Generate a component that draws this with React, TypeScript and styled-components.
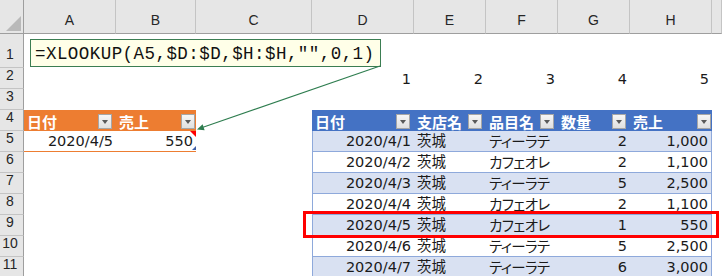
import React from 'react';
import styled, { createGlobalStyle, css } from 'styled-components';

const GlobalStyle = createGlobalStyle`
  html, body { margin: 0; padding: 0; background: #ffffff; }
  body { font-family: "DejaVu Sans", "Noto Sans CJK JP", sans-serif; }
`;

const COLS = '24px 92px 80px 116px 102px 72px 72px 72px 82px 1fr';

const Sheet = styled.div`
  position: relative;
  width: 722px;
  height: 276px;
  overflow: hidden;
  background: #ffffff;
`;

const Row = styled.div<{ $h: number }>`
  display: grid;
  grid-template-columns: ${COLS};
  height: ${(p) => p.$h}px;
`;

const Corner = styled.div`
  position: relative;
  background: #e6e6e6;
  border-right: 1px solid #9e9e9e;
  border-bottom: 1px solid #9e9e9e;
  box-sizing: border-box;
  &::after {
    content: '';
    position: absolute;
    right: 2px;
    bottom: 2px;
    width: 0;
    height: 0;
    border-left: 15px solid transparent;
    border-bottom: 15px solid #b9b9b9;
  }
`;

const ColHead = styled.div`
  box-sizing: border-box;
  background: #e6e6e6;
  border-right: 1px solid #c4c4c4;
  border-bottom: 1px solid #9e9e9e;
  display: flex;
  align-items: flex-end;
  justify-content: center;
  padding-bottom: 6px;
  font-family: "Liberation Sans", Arial, sans-serif;
  font-size: 14px;
  color: #262626;
  line-height: 1;
`;

const RowHead = styled.div`
  box-sizing: border-box;
  background: #e6e6e6;
  border-right: 1px solid #9e9e9e;
  border-bottom: 1px solid #c4c4c4;
  display: flex;
  align-items: flex-end;
  justify-content: center;
  padding: 0 3px 6px 0;
  font-family: "Liberation Sans", Arial, sans-serif;
  font-size: 14px;
  color: #262626;
  line-height: 1;
`;

type Kind = 'plain' | 'orangeHead' | 'blueHead' | 'band' | 'white' | 'orangeData';

const kindStyles: Record<Kind, ReturnType<typeof css>> = {
  plain: css`background: #ffffff;`,
  orangeHead: css`
    background: #ed7d31;
    color: #ffffff;
    font-weight: 700;
  `,
  blueHead: css`
    background: #4472c4;
    color: #ffffff;
    font-weight: 700;
  `,
  band: css`
    background: #d9e1f2;
    border-bottom: 1px solid #8ea9db;
  `,
  white: css`
    background: #ffffff;
    border-bottom: 1px solid #8ea9db;
  `,
  orangeData: css`
    background: #ffffff;
    border-bottom: 1px solid #ed7d31;
  `,
};

const Cell = styled.div<{ $kind: Kind; $align: 'left' | 'right'; $edge?: 'left' | 'right' }>`
  position: relative;
  box-sizing: border-box;
  display: flex;
  align-items: flex-end;
  justify-content: ${(p) => (p.$align === 'right' ? 'flex-end' : 'space-between')};
  gap: 2px;
  padding: 0 3px 3px 3px;
  font-size: 14.5px;
  line-height: 1;
  color: #1a1a1a;
  white-space: nowrap;
  font-feature-settings: "palt";
  ${(p) => kindStyles[p.$kind]}
  ${(p) => p.$edge === 'left' && css`border-left: 1px solid #8ea9db;`}
  ${(p) => p.$edge === 'right' && css`border-right: 1px solid #8ea9db;`}
`;

const HeadCell = styled(Cell)<{ $last?: boolean }>`
  align-items: center;
  padding: 0 ${(p) => (p.$last ? 1 : 4)}px 0 3px;
  font-family: "Noto Sans CJK JP", sans-serif;
  font-size: 15px;
`;

const Kana = styled.span`
  font-family: "Noto Sans CJK JP", sans-serif;
  letter-spacing: -0.6px;
`;

const Label = styled.span`
  padding-top: 1px;
`;

const FilterButton = styled.span`
  position: relative;
  flex: none;
  width: 14px;
  height: 15px;
  box-sizing: border-box;
  margin-top: 2px;
  background: linear-gradient(#f6f6f6, #e0e0e0);
  border: 1px solid #a6a6a6;
  &::after {
    content: '';
    position: absolute;
    left: 3px;
    top: 5px;
    width: 0;
    height: 0;
    border-left: 3.5px solid transparent;
    border-right: 3.5px solid transparent;
    border-top: 4px solid #595959;
  }
`;

const CommentMark = styled.span`
  position: absolute;
  top: 0;
  right: 0;
  width: 0;
  height: 0;
  border-left: 6px solid transparent;
  border-top: 6px solid #ff0000;
`;

const ResizeMark = styled.span`
  position: absolute;
  bottom: 1px;
  right: 0;
  width: 0;
  height: 0;
  border-left: 4px solid transparent;
  border-bottom: 4px solid #3d5fa8;
`;

const FormulaBox = styled.div`
  position: absolute;
  left: 30px;
  top: 39px;
  width: 351px;
  height: 28px;
  box-sizing: border-box;
  border: 1px solid #3b7d52;
  background: #ffffe8;
  display: flex;
  align-items: center;
  padding: 1px 0 0 4px;
  font-family: "Liberation Mono", "DejaVu Sans Mono", monospace;
  font-size: 17.5px;
  letter-spacing: 0.45px;
  color: #111111;
  white-space: nowrap;
`;

const ArrowLayer = styled.svg`
  position: absolute;
  left: 0;
  top: 0;
  pointer-events: none;
`;

const Highlight = styled.div`
  position: absolute;
  left: 303px;
  top: 211px;
  width: 416px;
  height: 27px;
  box-sizing: border-box;
  border: 3px solid #ff0000;
  pointer-events: none;
`;

const letters = ['A', 'B', 'C', 'D', 'E', 'F', 'G', 'H', ''];

type Rec = [string, string, string, number, string];
const records: Rec[] = [
  ['2020/4/1', '茨城', 'ティーラテ', 2, '1,000'],
  ['2020/4/2', '茨城', 'カフェオレ', 2, '1,100'],
  ['2020/4/3', '茨城', 'ティーラテ', 5, '2,500'],
  ['2020/4/4', '茨城', 'カフェオレ', 2, '1,100'],
  ['2020/4/5', '茨城', 'カフェオレ', 1, '550'],
  ['2020/4/6', '茨城', 'ティーラテ', 5, '2,500'],
  ['2020/4/7', '茨城', 'ティーラテ', 6, '3,000'],
];

const blueHeads = ['日付', '支店名', '品目名', '数量', '売上'];

const Blank = () => <Cell $kind="plain" $align="left" />;

const Filler = styled.div`
  background: #ffffff;
`;

export default function App() {
  return (
    <Sheet>
      <GlobalStyle />
      <Row $h={34}>
        <Corner />
        {letters.map((l, i) => (
          <ColHead key={i}>{l}</ColHead>
        ))}
      </Row>

      <Row $h={34}>
        <RowHead>1</RowHead>
        {Array.from({ length: 8 }).map((_, i) => (
          <Blank key={i} />
        ))}
        <Filler />
      </Row>

      <Row $h={21}>
        <RowHead>2</RowHead>
        <Blank />
        <Blank />
        <Blank />
        {[1, 2, 3, 4, 5].map((n) => (
          <Cell key={n} $kind="plain" $align="right">
            {n}
          </Cell>
        ))}
        <Filler />
      </Row>

      <Row $h={21}>
        <RowHead>3</RowHead>
        {Array.from({ length: 8 }).map((_, i) => (
          <Blank key={i} />
        ))}
        <Filler />
      </Row>

      <Row $h={21}>
        <RowHead>4</RowHead>
        <HeadCell $kind="orangeHead" $align="left">
          <Label>日付</Label>
          <FilterButton />
        </HeadCell>
        <HeadCell $kind="orangeHead" $align="left" $last>
          <Label>売上</Label>
          <FilterButton />
        </HeadCell>
        <Blank />
        {blueHeads.map((h, i) => (
          <HeadCell key={h} $kind="blueHead" $align="left" $last={i === blueHeads.length - 1}>
            <Label>{h}</Label>
            <FilterButton />
          </HeadCell>
        ))}
        <Filler />
      </Row>

      {records.map((r, i) => {
        const kind: Kind = i % 2 === 0 ? 'band' : 'white';
        return (
          <Row key={r[0]} $h={21}>
            <RowHead>{i + 5}</RowHead>
            {i === 0 ? (
              <>
                <Cell $kind="orangeData" $align="right">
                  2020/4/5
                </Cell>
                <Cell $kind="orangeData" $align="right">
                  550
                  <CommentMark />
                  <ResizeMark />
                </Cell>
              </>
            ) : (
              <>
                <Blank />
                <Blank />
              </>
            )}
            <Blank />
            <Cell $kind={kind} $align="right" $edge="left">
              {r[0]}
            </Cell>
            <Cell $kind={kind} $align="left">
              {r[1]}
            </Cell>
            <Cell $kind={kind} $align="left">
              <Kana>{r[2]}</Kana>
            </Cell>
            <Cell $kind={kind} $align="right">
              {r[3]}
            </Cell>
            <Cell $kind={kind} $align="right" $edge="right">
              {r[4]}
            </Cell>
            <Filler />
          </Row>
        );
      })}

      <FormulaBox>=XLOOKUP(A5,$D:$D,$H:$H,"",0,1)</FormulaBox>

      <ArrowLayer width={722} height={276} viewBox="0 0 722 276">
        <line x1={380} y1={66} x2={203} y2={127.3} stroke="#2e7d4f" strokeWidth={1.1} />
        <polygon points="197,129.5 204.6,130.2 202.6,124.3" fill="#2e7d4f" />
      </ArrowLayer>

      <Highlight />
    </Sheet>
  );
}
